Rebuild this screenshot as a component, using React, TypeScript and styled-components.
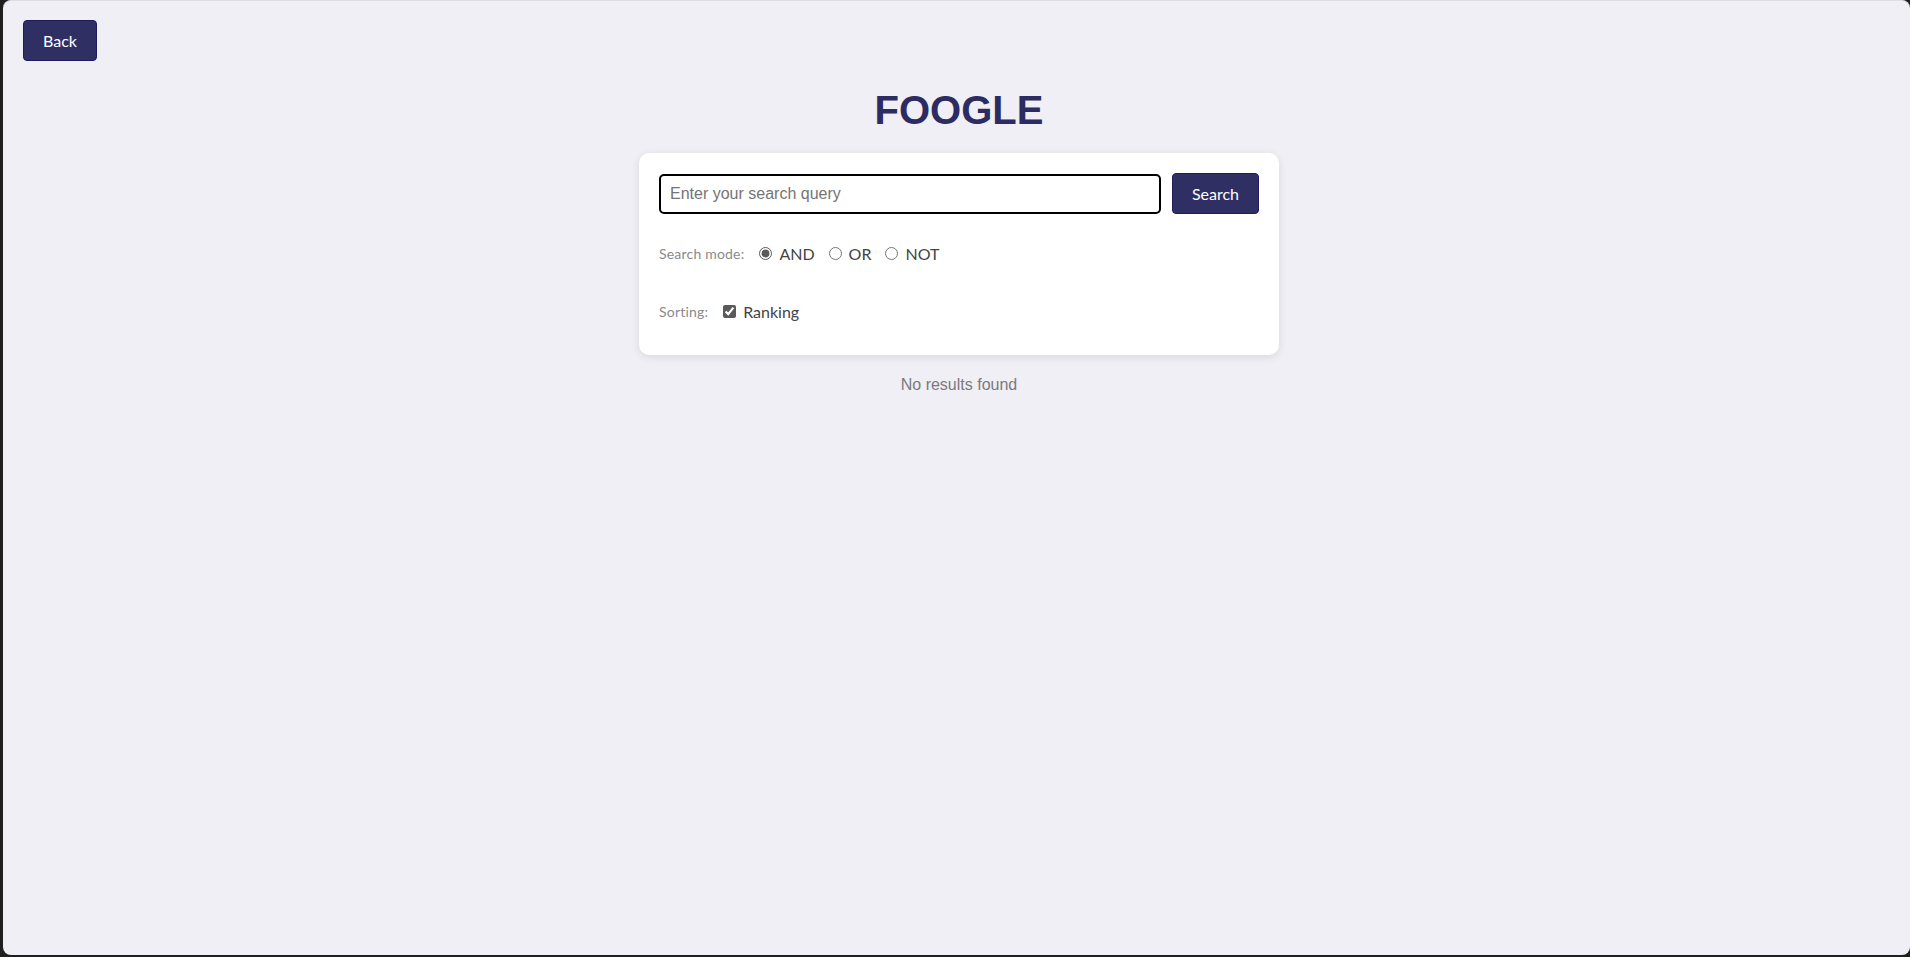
import React, { useState } from "react";
import styled, { createGlobalStyle } from "styled-components";

const GlobalStyle = createGlobalStyle`
  html, body {
    margin: 0;
    padding: 0;
    background: #1f1f1f;
    overflow: hidden;
  }
  * { box-sizing: border-box; }
`;

const Window = styled.div`
  margin-left: 3px;
  height: 955px;
  background: #f0eff5;
  border-top: 1px solid #dedde3;
  border-radius: 8px;
  padding: 19px 15px 0 20px;
  display: flex;
  flex-direction: column;
  font-family: "Segoe UI", Lato, sans-serif;
`;

const TopBar = styled.div`
  display: flex;
`;

const Button = styled.button`
  font-family: "Segoe UI", Lato, sans-serif;
  font-size: 16px;
  line-height: 21px;
  color: #ffffff;
  background: #2f2f63;
  border: 1px solid #1d1d5e;
  border-radius: 4px;
  padding: 9px 19px;
  cursor: pointer;
`;

const Main = styled.main`
  display: flex;
  flex-direction: column;
  align-items: center;
`;

const Title = styled.h1`
  font-family: "Liberation Sans", Arial, sans-serif;
  font-weight: 700;
  font-size: 40px;
  line-height: 46px;
  color: #2c2c62;
  margin: 26px 0 20px;
`;

const Card = styled.section`
  width: 640px;
  background: #ffffff;
  border-radius: 10px;
  padding: 20px;
  box-shadow: 0 2px 8px rgba(0, 0, 0, 0.1);
`;

const SearchRow = styled.div`
  display: flex;
  align-items: center;
  gap: 11px;
`;

const SearchInput = styled.input`
  flex: 1;
  height: 40px;
  border: 2px solid #000000;
  border-radius: 5px;
  padding: 0 9px;
  font-family: "Liberation Sans", Arial, sans-serif;
  font-size: 16px;
  color: #222;
  outline: none;
  &::placeholder {
    color: #757575;
  }
`;

const Options = styled.div`
  display: grid;
  row-gap: 36px;
  margin-top: 28px;
  padding-bottom: 13px;
`;

const OptionRow = styled.div`
  display: flex;
  align-items: center;
  height: 22px;
`;

const OptionLabel = styled.span`
  font-size: 14px;
  letter-spacing: 0.2px;
  color: #8a8a8a;
  margin-right: 10px;
`;

const Choice = styled.label`
  display: flex;
  align-items: center;
  font-size: 16px;
  color: #444444;
  margin-right: 9px;
  cursor: pointer;
`;

const Control = styled.input`
  width: 13px;
  height: 13px;
  margin: 0 7px 0 5px;
  accent-color: #5a5a5a;
`;

const Empty = styled.p`
  font-family: "Liberation Sans", Arial, sans-serif;
  font-size: 16px;
  line-height: 18px;
  color: #7a7a7a;
  margin: 21px 0 0;
`;

export default function App() {
  const [mode, setMode] = useState("AND");
  const [ranking, setRanking] = useState(true);
  const modes = ["AND", "OR", "NOT"];

  return (
    <>
      <GlobalStyle />
      <Window>
        <TopBar>
          <Button>Back</Button>
        </TopBar>
        <Main>
          <Title>FOOGLE</Title>
          <Card>
            <SearchRow>
              <SearchInput placeholder="Enter your search query" />
              <Button>Search</Button>
            </SearchRow>
            <Options>
              <OptionRow>
                <OptionLabel>Search mode:</OptionLabel>
                {modes.map((m) => (
                  <Choice key={m}>
                    <Control
                      type="radio"
                      name="mode"
                      checked={mode === m}
                      onChange={() => setMode(m)}
                    />
                    {m}
                  </Choice>
                ))}
              </OptionRow>
              <OptionRow>
                <OptionLabel>Sorting:</OptionLabel>
                <Choice>
                  <Control
                    type="checkbox"
                    checked={ranking}
                    onChange={() => setRanking(!ranking)}
                  />
                  Ranking
                </Choice>
              </OptionRow>
            </Options>
          </Card>
          <Empty>No results found</Empty>
        </Main>
      </Window>
    </>
  );
}
